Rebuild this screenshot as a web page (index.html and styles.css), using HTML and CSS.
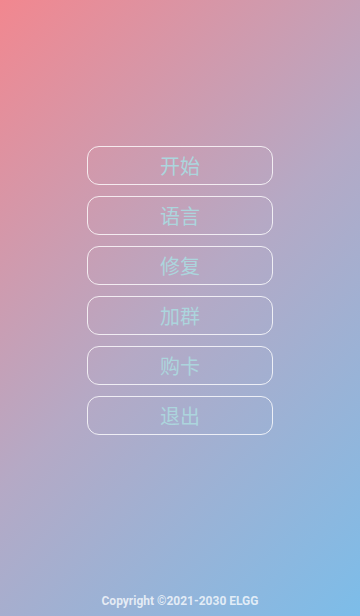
FILE: index.html
```html
<!DOCTYPE html>
<html lang="zh">
<head>
    <meta charset="UTF-8">
    <meta name="viewport" content="width=device-width, initial-scale=1.0">
    <title>菜单</title>
    <link rel="stylesheet" href="styles.css">
</head>
<body>
    <div class="screen">
        <div class="menu">
            <button class="menu-btn">开始</button>
            <button class="menu-btn">语言</button>
            <button class="menu-btn">修复</button>
            <button class="menu-btn">加群</button>
            <button class="menu-btn">购卡</button>
            <button class="menu-btn">退出</button>
        </div>
        <div class="footer">Copyright ©2021-2030 ELGG</div>
    </div>
</body>
</html>
```

FILE: styles.css
```css
* {
    margin: 0;
    padding: 0;
    box-sizing: border-box;
}

body {
    width: 360px;
    height: 616px;
    overflow: hidden;
    font-family: Roboto, "Noto Sans CJK SC", sans-serif;
}

.screen {
    width: 360px;
    height: 616px;
    background: linear-gradient(135deg, #f2878f 0%, #b5a9c5 50%, #7cbde9 100%);
    display: flex;
    flex-direction: column;
    align-items: center;
}

.menu {
    margin-top: 146px;
    display: flex;
    flex-direction: column;
    gap: 11px;
}

.menu-btn {
    width: 186px;
    height: 39px;
    border: 1px solid rgba(255, 255, 255, 0.8);
    border-radius: 12px;
    background: transparent;
    color: #acd5dd;
    font-family: "Noto Sans CJK SC", sans-serif;
    font-size: 20px;
    line-height: 37px;
    cursor: pointer;
}

.footer {
    margin-top: auto;
    margin-bottom: 8px;
    color: rgba(255, 255, 255, 0.75);
    font-size: 12px;
    font-weight: 700;
}
```
